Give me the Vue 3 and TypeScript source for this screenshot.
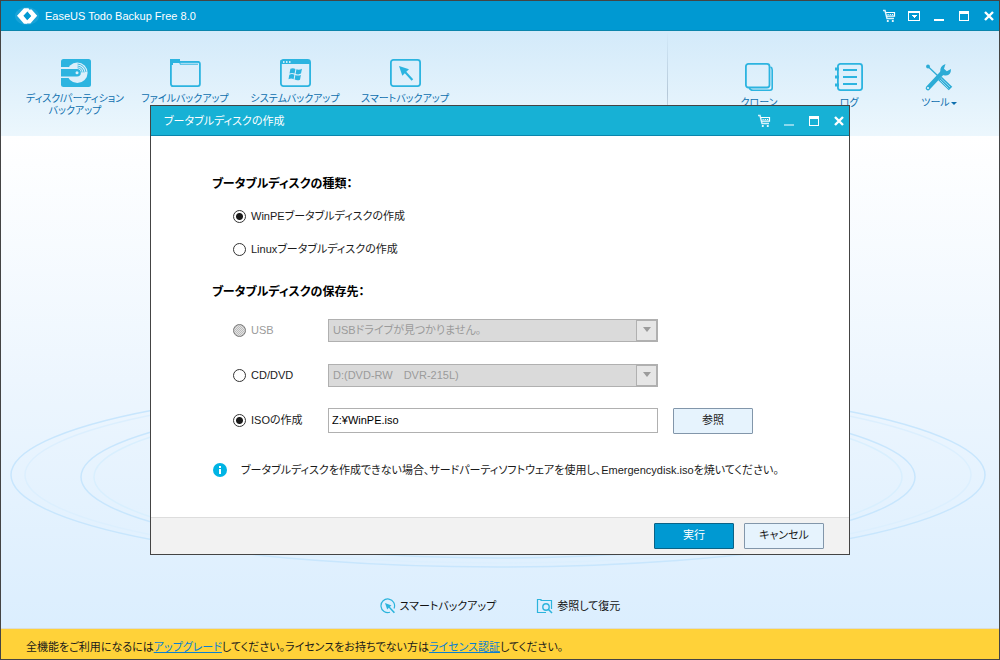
<script setup lang="ts">
import { ref } from 'vue'

type DiskKind = 'winpe' | 'linux'
type Target = 'usb' | 'cd' | 'iso'

const kind = ref<DiskKind>('winpe')
const target = ref<Target>('iso')
const isoPath = ref('Z:¥WinPE.iso')

const kinds: { value: DiskKind; label: string }[] = [
  { value: 'winpe', label: 'WinPEブータブルディスクの作成' },
  { value: 'linux', label: 'Linuxブータブルディスクの作成' },
]
</script>

<template>
  <div class="app">
    <header class="titlebar">
      <svg class="logo" width="30" height="26" viewBox="0 0 30 26" aria-hidden="true">
        <ellipse cx="15" cy="13" rx="12" ry="9" fill="#5fc3ea" opacity="0.25" />
        <path d="M5 12.8 L12 5.2 H16.5 L17.5 7 L12.3 12.6 L16.6 17.4 L14.6 20.8 H12 Z" fill="#fff" />
        <path d="M17.6 6.4 H19.6 L25.2 12.8 L18.4 20.6 H13.8 L13 19.2 L18.7 13.2 L15.4 9.3 Z" fill="#fff" />
        <path d="M15.4 8.6 L11.4 12.8 L15.2 17.2 L19.2 13 Z" fill="#0099d2" />
      </svg>
      <h1 class="app-name">EaseUS Todo Backup Free 8.0</h1>
      <div class="window-buttons">
        <button type="button" aria-label="購入">
          <svg width="14" height="14" viewBox="0 0 14 14">
            <path d="M1 1.5 H3 L5 9.5 H12" fill="none" stroke="#d9f1fb" stroke-width="1.5" />
            <path d="M3.5 3.5 H12.5 V7.2 H4.5" fill="none" stroke="#fff" stroke-width="1.2" />
            <path d="M5.5 5.5 H11.5" stroke="#fff" stroke-width="1.2" stroke-dasharray="1.2 1" />
            <circle cx="5.8" cy="12" r="1.1" fill="#fff" /><circle cx="10.8" cy="12" r="1.1" fill="#fff" />
          </svg>
        </button>
        <button type="button" aria-label="メニュー">
          <svg width="12" height="10" viewBox="0 0 12 10" shape-rendering="crispEdges">
            <path d="M0 0 H12 V10 H0 Z M1 2 V9 H11 V2 Z" fill="#fff" fill-rule="evenodd" />
            <path d="M3 4 H9 L6 7 Z" fill="#fff" />
          </svg>
        </button>
        <button type="button" aria-label="最小化">
          <svg width="10" height="10" viewBox="0 0 10 10"><path d="M0 8 H10 V10 H0 Z" fill="#fff" /></svg>
        </button>
        <button type="button" aria-label="最大化">
          <svg width="10" height="10" viewBox="0 0 10 10">
            <path d="M0 0 H10 V10 H0 Z M1 3 V9 H9 V3 Z" fill="#fff" fill-rule="evenodd" />
          </svg>
        </button>
        <button type="button" aria-label="閉じる">
          <svg width="10" height="10" viewBox="0 0 10 10"><path d="M1 1 L9 9 M9 1 L1 9" stroke="#fff" stroke-width="2.4" /></svg>
        </button>
      </div>
    </header>

    <nav class="toolbar">
      <div class="tools">
        <button type="button" class="tool">
          <svg width="32" height="30" viewBox="-1 0 32 30">
            <rect x="1" y="1" width="30" height="28" rx="2.5" fill="#2cb4e0" />
            <circle cx="17.3" cy="14.8" r="10.3" fill="#dceffb" />
            <path d="M1 9 H12 V20 H1 Z" fill="#dceffb" />
            <path d="M1 11 H17 A3.8 3.8 0 0 1 17 18.6 H1 Z" fill="#2cb4e0" />
            <circle cx="17" cy="14.8" r="1.5" fill="#dceffb" />
            <path d="M17.5 8 A7 7 0 0 1 24 14.5 M17.5 6 A9 9 0 0 1 26 14 M17.5 9.8 A5 5 0 0 1 22 14.5" fill="none" stroke="#2cb4e0" stroke-width="0.9" />
          </svg>
          <span>ディスク/パーティション<br />バックアップ</span>
        </button>
        <button type="button" class="tool">
          <svg width="32" height="30" viewBox="0 0 32 30">
            <rect x="1.9" y="3.9" width="29" height="24.2" rx="2" fill="none" stroke="#2cb4e0" stroke-width="1.8" />
            <path d="M1 1 H11 V3 H30 V4.5 H4 V7 H1 Z" fill="#2cb4e0" />
            <path d="M4 4.500 H11 V6.200 H29" fill="none" stroke="#2cb4e0" stroke-width="1" />
          </svg>
          <span>ファイルバックアップ</span>
        </button>
        <button type="button" class="tool">
          <svg width="32" height="30" viewBox="0 0 32 30">
            <rect x="1.9" y="1.9" width="29.2" height="26.2" rx="2.5" fill="none" stroke="#2cb4e0" stroke-width="1.8" />
            <path d="M1.5 2 H31 V6 H1.5 Z" fill="#2cb4e0" />
            <path d="M4 4 H5.5 M7 4 H8.5 M10 4 H11.5" stroke="#fff" stroke-width="1.5" />
            <path d="M11.4 10.8 Q14 9.5 16.4 11 L15.6 15.6 Q13 14.3 10.5 15.6 Z M17.4 11.3 Q20 12.5 23 10.8 L22 15.6 Q19.5 17 16.6 15.9 Z M10.3 16.7 Q13 15.4 15.4 16.7 L14.6 21.2 Q12 20 9.5 21.3 Z M16.4 17 Q19 18.2 21.9 17 L21 21.7 Q18.5 23 15.6 21.5 Z" fill="#2cb4e0" />
          </svg>
          <span>システムバックアップ</span>
        </button>
        <button type="button" class="tool">
          <svg width="32" height="30" viewBox="0 0 32 30">
            <rect x="1.9" y="1.9" width="29.2" height="26.2" rx="2.5" fill="none" stroke="#2cb4e0" stroke-width="1.8" />
            <path d="M10 8 L20 11.3 L17.300 13.8 L24.200 21.2 L22.600 22.7 L15.800 15.200 L13.3 17.8 Z" fill="#2cb4e0" />
          </svg>
          <span>スマートバックアップ</span>
        </button>
      </div>
      <div class="tools side">
        <button type="button" class="tool narrow">
          <svg width="30" height="30" viewBox="0 0 30 30">
            <rect x="1.9" y="1.9" width="23.6" height="23.6" rx="2.5" fill="none" stroke="#2cb4e0" stroke-width="1.8" />
            <path d="M26.5 5 Q28.2 5.5 28.2 8 V26 Q28.2 28.2 26 28.2 H9 Q6 28.2 5.5 26" fill="none" stroke="#2cb4e0" stroke-width="1.6" />
          </svg>
          <span>クローン</span>
        </button>
        <button type="button" class="tool narrow">
          <svg width="30" height="30" viewBox="0 0 30 30">
            <rect x="3.9" y="1.9" width="24.2" height="26.2" rx="2.5" fill="none" stroke="#2cb4e0" stroke-width="1.8" />
            <path d="M9 8 H23 M9 15 H23 M9 22 H23" stroke="#2cb4e0" stroke-width="1.8" />
            <path d="M1 7 H5 M1 15 H5 M1 23 H5" stroke="#2cb4e0" stroke-width="3.2" />
          </svg>
          <span>ログ</span>
        </button>
        <button type="button" class="tool narrow">
          <svg width="30" height="30" viewBox="0 0 30 30">
            <path d="M3.5 4 L14 14" stroke="#2cacd6" stroke-width="1.3" />
            <circle cx="4" cy="4.5" r="1.9" fill="#2cacd6" />
            <path d="M16 16.5 L26.5 26.5" stroke="#2cacd6" stroke-width="5" />
            <path d="M17 16.5 L26 25 M16 18 L24.5 26.5" stroke="#a5dcf1" stroke-width="0.9" />
            <path d="M4 26 L19 10" stroke="#2cacd6" stroke-width="4.6" stroke-linecap="round" />
            <path d="M21.5 2 Q15.5 4 16.3 10 Q18 14 22 13.5 Q27 13 27 7 L22.8 9.3 L20 6.8 Z" fill="#2cacd6" />
            <circle cx="4" cy="26" r="1.1" fill="#e4f3fc" />
          </svg>
          <span>ツール<i class="caret"></i></span>
        </button>
      </div>
    </nav>

    <main class="stage">
      <svg class="rings" viewBox="0 0 998 492" preserveAspectRatio="none" aria-hidden="true">
        <g fill="none" stroke-width="1.5">
          <ellipse cx="497" cy="339" rx="487" ry="92" stroke="#c8e6fd" />
          <ellipse cx="497" cy="339" rx="473" ry="88" stroke="#dceffe" />
          <ellipse cx="497" cy="341" rx="417" ry="81" stroke="#c8e6fd" />
          <ellipse cx="497" cy="341" rx="404" ry="78" stroke="#d9effe" />
        </g>
      </svg>
      <div class="shortcuts">
        <a href="#smart">
          <svg width="16" height="16" viewBox="0 0 16 16">
            <path d="M10 14.2 A6.8 6.8 0 1 1 14 10.5" fill="none" stroke="#2cb4dc" stroke-width="1.2" />
            <path d="M5 5 L11.500 7.500 L9.800 8.800 L15 14.2 L13.8 15.2 L8.800 9.800 L7.200 11.500 Z" fill="#2cb4dc" />
          </svg>
          <span>スマートバックアップ</span>
        </a>
        <a href="#restore">
          <svg width="17" height="16" viewBox="0 0 17 16">
            <path d="M10 14.5 H1.5 V1.5 H5 V2.5 H15.5 V11" fill="none" stroke="#2cb4dc" stroke-width="1.2" />
            <circle cx="10" cy="9" r="3.2" fill="none" stroke="#2cb4dc" stroke-width="1.4" />
            <path d="M12 11 L16 15" stroke="#2cb4dc" stroke-width="1.6" />
          </svg>
          <span>参照して復元</span>
        </a>
      </div>
    </main>

    <footer class="notice">
      <p>全機能をご利用になるには<a href="#upgrade">アップグレード</a>してください。ライセンスをお持ちでない方は<a href="#license">ライセンス認証</a>してください。</p>
    </footer>

    <div class="overlay">
      <section class="dialog" role="dialog" aria-labelledby="dialog-title">
        <header class="titlebar dialog-bar">
          <h2 id="dialog-title" class="dialog-title">ブータブルディスクの作成</h2>
          <div class="window-buttons">
            <button type="button" aria-label="購入">
              <svg width="14" height="14" viewBox="0 0 14 14">
                <path d="M1 1.5 H3 L5 9.5 H12" fill="none" stroke="#d9f1fb" stroke-width="1.5" />
                <path d="M3.5 3.5 H12.5 V7.2 H4.5" fill="none" stroke="#fff" stroke-width="1.2" />
                <path d="M5.5 5.5 H11.5" stroke="#fff" stroke-width="1.2" stroke-dasharray="1.2 1" />
                <circle cx="5.8" cy="12" r="1.1" fill="#fff" /><circle cx="10.8" cy="12" r="1.1" fill="#fff" />
              </svg>
            </button>
            <button type="button" aria-label="最小化" disabled>
              <svg width="10" height="10" viewBox="0 0 10 10"><path d="M0 8 H10 V10 H0 Z" fill="#8bd8ec" /></svg>
            </button>
            <button type="button" aria-label="最大化">
              <svg width="10" height="10" viewBox="0 0 10 10">
                <path d="M0 0 H10 V10 H0 Z M1 3 V9 H9 V3 Z" fill="#fff" fill-rule="evenodd" />
              </svg>
            </button>
            <button type="button" aria-label="閉じる">
              <svg width="10" height="10" viewBox="0 0 10 10"><path d="M1 1 L9 9 M9 1 L1 9" stroke="#fff" stroke-width="2.4" /></svg>
            </button>
          </div>
        </header>

        <form class="dialog-form" @submit.prevent>
          <div class="dialog-body">
            <h3>ブータブルディスクの種類：</h3>
            <div v-for="k in kinds" :key="k.value" class="choice">
              <input :id="k.value" v-model="kind" type="radio" name="kind" :value="k.value" />
              <label :for="k.value">{{ k.label }}</label>
            </div>

            <h3 class="second">ブータブルディスクの保存先：</h3>
            <div class="row">
              <div class="choice">
                <input id="usb" v-model="target" type="radio" name="target" value="usb" disabled />
                <label for="usb">USB</label>
              </div>
              <div class="picker">
                <select aria-label="USB" disabled><option>USBドライブが見つかりません。</option></select>
                <span class="arrow"></span>
              </div>
            </div>
            <div class="row">
              <div class="choice">
                <input id="cd" v-model="target" type="radio" name="target" value="cd" />
                <label for="cd">CD/DVD</label>
              </div>
              <div class="picker">
                <select aria-label="CD/DVD" disabled><option>D:(DVD-RW&#12288;DVR-215L)</option></select>
                <span class="arrow"></span>
              </div>
            </div>
            <div class="row">
              <div class="choice">
                <input id="iso" v-model="target" type="radio" name="target" value="iso" />
                <label for="iso">ISOの作成</label>
              </div>
              <input v-model="isoPath" class="path" type="text" aria-label="ISOの作成" />
              <button type="button" class="btn browse">参照</button>
            </div>

            <p class="info">
              <svg width="14" height="14" viewBox="0 0 14 14" aria-hidden="true">
                <circle cx="7" cy="7" r="7" fill="#00b4e4" />
                <path d="M6 3 H8 V5 H6 Z M6 6 H8 V11 H6 Z" fill="#fff" />
              </svg>
              <span>ブータブルディスクを作成できない場合、サードパーティソフトウェアを使用し、Emergencydisk.isoを焼いてください。</span>
            </p>
          </div>
          <div class="dialog-footer">
            <button type="submit" class="btn primary">実行</button>
            <button type="button" class="btn">キャンセル</button>
          </div>
        </form>
      </section>
    </div>
  </div>
</template>

<style>
body {
  margin: 0;
}
</style>

<style scoped>
* {
  box-sizing: border-box;
}

.app {
  display: flex;
  flex-direction: column;
  min-height: 100vh;
  border: 1px solid #444;
  font-family: "Liberation Sans", "Noto Sans CJK JP", sans-serif;
  font-size: 11px;
  font-feature-settings: "palt";
  line-height: 16px;
  color: #1a1a1a;
}

button,
input,
select {
  margin: 0;
  padding: 0;
  font: inherit;
  font-feature-settings: inherit;
  color: inherit;
}

h1,
h2,
h3,
p {
  margin: 0;
  font-size: inherit;
  font-weight: normal;
}

svg {
  display: block;
}

.titlebar {
  display: flex;
  align-items: center;
  height: 30px;
  border-bottom: 1px solid #0a85ac;
  background: #0099d2;
  color: #fff;
}

.logo {
  margin-left: 11px;
}

.app-name {
  margin-left: 3px;
}

.window-buttons {
  display: flex;
  gap: 5px;
  margin-left: auto;
}

.window-buttons button {
  display: flex;
  align-items: center;
  justify-content: center;
  width: 20px;
  height: 20px;
  border: 0;
  background: none;
}

.toolbar {
  display: flex;
  justify-content: space-between;
  height: 105px;
  padding: 27px 15px 0 19px;
  background: linear-gradient(#d3eafa, #ecf7fd);
}

.tools {
  display: flex;
  align-items: flex-start;
}

.side {
  position: relative;
  padding-top: 4px;
}

.side::before {
  content: "";
  position: absolute;
  top: -27px;
  bottom: 0;
  left: -47px;
  width: 1px;
  background: linear-gradient(#d3eafa, #b5c8d8 60%, #e4f2fa);
}

.tool {
  display: flex;
  flex-direction: column;
  align-items: center;
  gap: 5px;
  width: 110px;
  border: 0;
  background: none;
  color: #0d6fae;
  font-size: 10px;
  line-height: 12px;
  white-space: nowrap;
}

.narrow {
  width: 90px;
}

.caret {
  display: inline-block;
  margin-left: 1px;
  border: 3px solid transparent;
  border-top-color: #0d6fae;
  border-bottom-width: 0;
  vertical-align: middle;
}

.stage {
  position: relative;
  display: flex;
  flex: 1;
  align-items: flex-end;
  justify-content: center;
  padding-bottom: 14px;
  background: linear-gradient(#fff, #ebf5fe 55%, #dbeefe);
}

.rings {
  position: absolute;
  inset: 0;
  width: 100%;
  height: 100%;
}

.shortcuts {
  position: relative;
  display: flex;
  gap: 40px;
}

.shortcuts a {
  display: flex;
  align-items: center;
  gap: 4px;
  color: #111;
  text-decoration: none;
}

.notice {
  height: 31px;
  padding: 10px 25px 0;
  border-top: 1px solid #dcdcd4;
  background: #ffd239;
}

.notice a {
  color: #0a7fd0;
}

.overlay {
  position: fixed;
  inset: 0;
  display: flex;
  align-items: center;
  justify-content: center;
}

.dialog {
  width: 70%;
  min-width: 660px;
  border: 1px solid #444;
  background: #fff;
}

.dialog-bar {
  background: #17b1d5;
}

.dialog-title {
  margin-left: 13px;
}

.dialog-body {
  padding: 32px 25px 37px 61px;
}

h3 {
  height: 32px;
  color: #000;
  font-size: 12px;
  font-weight: bold;
  line-height: 32px;
}

.second {
  margin-top: 10px;
}

.choice {
  display: flex;
  align-items: center;
  gap: 5px;
  height: 33px;
  padding-left: 21px;
}

.choice label {
  padding-bottom: 2px;
}

.choice input {
  width: 13px;
  height: 13px;
  border: 1px solid #333;
  border-radius: 50%;
  appearance: none;
  background: #fff;
}

.choice input:checked {
  background: radial-gradient(circle, #1a1a1a 3px, #fff 4px);
}

.choice input:disabled {
  border-color: #777;
  background: repeating-conic-gradient(#bbb 0 25%, #e4e4e4 0 50%) 0 0 / 2px 2px;
}

.choice input:disabled + label {
  color: #9b9b9b;
}

.row {
  display: grid;
  grid-template-columns: 116px minmax(200px, 330px) 80px;
  align-items: center;
  height: 45px;
}

.browse {
  margin-left: 15px;
}

.picker {
  position: relative;
  height: 23px;
}

.picker select {
  width: 100%;
  height: 23px;
  padding: 0 4px 2px;
  border: 1px solid #b0b0b0;
  border-radius: 0;
  appearance: none;
  background: #dadada;
  color: #9b9b9b;
  opacity: 1;
}

.arrow {
  position: absolute;
  top: 1px;
  right: 1px;
  display: flex;
  justify-content: center;
  width: 21px;
  height: 21px;
  border: 1px solid #b0b0b0;
  background: #e6e6e6;
  pointer-events: none;
}

.arrow::before {
  content: "";
  height: 5px;
  margin-top: 6px;
  border: 4px solid transparent;
  border-top: 5px solid #9b9b9b;
  border-bottom-width: 0;
}

.path {
  height: 25px;
  padding: 0 3px 2px;
  border: 1px solid #b0b0b0;
  background: #fff;
  color: #000;
}

.btn {
  width: 80px;
  height: 26px;
  padding-bottom: 2px;
  border: 1px solid #8296aa;
  border-radius: 1px;
  background: #e6f3fd;
}

.primary {
  border-color: #0a6286;
  background: #0099d2;
  color: #fff;
}

.info {
  display: flex;
  align-items: center;
  gap: 14px;
  height: 20px;
  margin-top: 17px;
  padding-left: 1px;
  white-space: nowrap;
}

.dialog-footer {
  display: flex;
  align-items: center;
  justify-content: flex-end;
  gap: 10px;
  height: 37px;
  padding-right: 25px;
  border-top: 1px solid #ddd;
  background: #f2f2f2;
}
</style>
